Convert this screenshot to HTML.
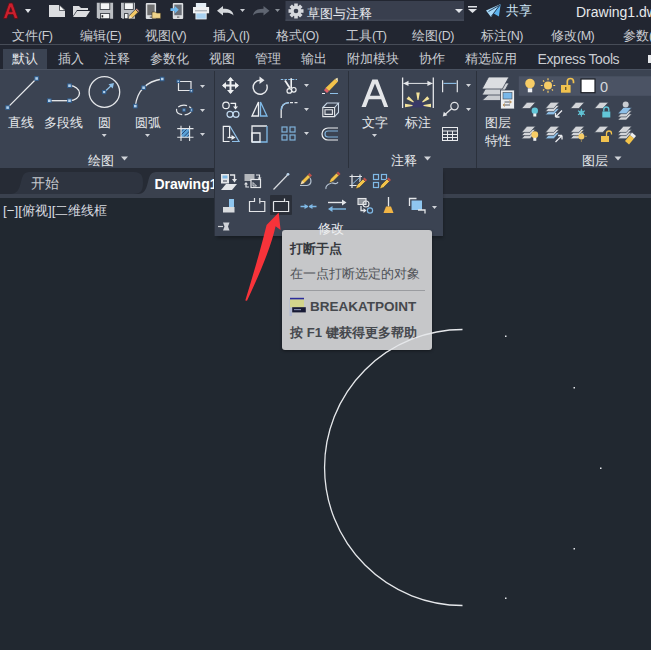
<!DOCTYPE html>
<html><head><meta charset="utf-8">
<style>
*{margin:0;padding:0;box-sizing:border-box}
html,body{width:651px;height:650px;overflow:hidden;background:#212830;font-family:"Liberation Sans",sans-serif}
.a{position:absolute}
.t{position:absolute;white-space:nowrap;line-height:1;color:#d9dce0;font-size:13px}
svg{position:absolute;overflow:visible}
</style></head><body>
<!-- title + menu + ribbon tabs background -->
<div class="a" style="left:0;top:0;width:651px;height:69px;background:#222631"></div>
<div class="a" style="left:0;top:44px;width:651px;height:1px;background:#474c57"></div>
<!-- ribbon panel -->
<div class="a" style="left:0;top:69px;width:651px;height:99px;background:#3b4352"></div>
<!-- file tab bar -->
<div class="a" style="left:0;top:168px;width:651px;height:26px;background:#262b35"></div>
<div class="a" style="left:0;top:194px;width:651px;height:4px;background:#3a414e"></div>
<!-- canvas -->
<div class="a" style="left:0;top:198px;width:651px;height:452px;background:#212830"></div>

<!-- ===== TITLE BAR ===== -->
<svg style="left:0;top:0" width="651" height="24">
 <!-- A logo -->
 <path d="M3.5 18.5 L9 3 L12.5 3 L18 18.5 L14.5 18.5 L13 14.5 L8.3 14.5 L6.8 18.5 Z M9.2 11.8 L12.2 11.8 L10.7 7.5 Z" fill="#cc1f2d" stroke="#5a1018" stroke-width="0.8"/>
 <path d="M25 9 L31 9 L28 13 Z" fill="#e0e3e8"/>
 <!-- new -->
 <path d="M49 5 L59 5 L65 10 L65 17 L49 17 Z" fill="#dcdde0"/>
 <path d="M59.5 5 L59.5 10.5 L65 10.5 Z" fill="#fafafa" stroke="#2a2e36" stroke-width="0.7"/>
 <!-- open -->
 <path d="M73 6 L79 6 L81 8 L88 8 L88 10 L77 10 L73 16 Z" fill="#dcdde0"/>
 <path d="M77 11 L90 11 L86 17 L73 17 Z" fill="#dcdde0"/>
 <!-- save -->
 <path d="M96.8 2.8 L113.1 2.8 L113.1 18.7 L98.3 18.7 L96.8 17.2 Z" fill="#bcbfc4"/>
 <rect x="100.2" y="2.8" width="9.6" height="6.6" fill="#f4f5f6" stroke="#2a2e36" stroke-width="0.8"/>
 <rect x="100.4" y="13.6" width="9.3" height="5.1" fill="#f4f5f6" stroke="#2a2e36" stroke-width="0.8"/>
 <rect x="101.6" y="15.2" width="1.6" height="2.2" fill="#222"/>
 <!-- save as -->
 <path d="M121 2.8 L135 2.8 L135 18.7 L122.5 18.7 L121 17.2 Z" fill="#bcbfc4"/>
 <rect x="124.3" y="2.8" width="9" height="6.6" fill="#f4f5f6" stroke="#2a2e36" stroke-width="0.8"/>
 <rect x="124.5" y="13.6" width="3.5" height="5.1" fill="#f4f5f6" stroke="#2a2e36" stroke-width="0.8"/>
 <path d="M128.8 18.8 L129.6 15.2 L135.4 9.4 L138.2 12.2 L132.4 18 Z" fill="#f3c865" stroke="#2a2e36" stroke-width="0.7"/>
 <path d="M135.4 9.4 L136.6 8.2 L139.4 11 L138.2 12.2 Z" fill="#d99a8a" stroke="#2a2e36" stroke-width="0.6"/>
 <path d="M128.8 18.8 L129.6 15.2 L132.4 18 Z" fill="#f5e2c0"/>
 <!-- phone folder -->
 <rect x="145.8" y="3" width="10.3" height="16" rx="1" fill="#dcdee1"/>
 <rect x="147.3" y="4.6" width="7.3" height="10.6" fill="#6f6f70"/>
 <rect x="149.8" y="16.6" width="2.4" height="1" fill="#555"/>
 <path d="M152 12 L155.5 12 L156.5 13 L160.7 13 L160.7 18.4 L152 18.4 Z" fill="#f0d48a" stroke="#3a3020" stroke-width="0.6"/>
 <!-- phone arrow -->
 <rect x="172.8" y="3" width="10.4" height="16" rx="1" fill="#dcdee1"/>
 <rect x="174.3" y="4.6" width="7.4" height="10.6" fill="#6a6f78"/>
 <rect x="177" y="16.6" width="2.4" height="1" fill="#555"/>
 <path d="M170.5 8.3 L174.8 8.3 L174.8 6 L178.8 9.7 L174.8 13.4 L174.8 11.1 L170.5 11.1 Z" fill="#6cb8ef"/>
 <!-- print -->
 <rect x="195.9" y="3" width="10.3" height="4" fill="#e4eef6"/>
 <rect x="193" y="7" width="16.1" height="6.3" fill="#eef0f2"/>
 <rect x="195.9" y="13" width="10.3" height="6" fill="#a9d2f2" stroke="#eef0f2" stroke-width="0.8"/>
 <rect x="195" y="10.3" width="12" height="1" fill="#9aa0a8"/>
 <!-- undo -->
 <path d="M217 10.8 L223 6 L223 8.8 C229 8.8 233 10.5 233.5 15.5 C231 12.8 228 12.8 223 12.8 L223 15.6 Z" fill="#d5d8dc"/>
 <path d="M240 9 L245 9 L242.5 12 Z" fill="#c9ccd2"/>
 <path d="M269.5 10.8 L263.5 6 L263.5 8.8 C257.5 8.8 253.5 10.5 253 15.5 C255.5 12.8 258.5 12.8 263.5 12.8 L263.5 15.6 Z" fill="#5f6571"/>
 <path d="M275 9 L280 9 L277.5 12 Z" fill="#8a9099"/>
 <!-- workspace combo -->
 <rect x="285.5" y="1" width="178.5" height="20" fill="#393f4e"/><rect x="285.5" y="19.5" width="178.5" height="1.2" fill="#474d5b"/>
 <g transform="translate(296,11)" fill="#d5d8dd">
  <circle r="5.2"/>
  <rect x="-1.8" y="-7.5" width="3.6" height="15"/>
  <rect x="-1.8" y="-7.5" width="3.6" height="15" transform="rotate(45)"/>
  <rect x="-1.8" y="-7.5" width="3.6" height="15" transform="rotate(90)"/>
  <rect x="-1.8" y="-7.5" width="3.6" height="15" transform="rotate(135)"/>
  <circle r="2.3" fill="#393f4e"/>
 </g>
 <path d="M455 9 L463 9 L459 13 Z" fill="#e0e3e8"/>
 <rect x="468" y="6" width="9" height="1.5" fill="#e0e3e8"/>
 <path d="M468 9 L477 9 L472.5 13 Z" fill="#e0e3e8"/>
 <!-- share -->
 <path d="M486 10.6 L500.7 4.1 L491 17 Z" fill="#a6d8f7"/>
 <path d="M500.7 4.1 L498.9 16.6 L493.8 13.6 Z" fill="#5bb3ee"/>
 <path d="M491.5 16 L500.3 4.6 M488.5 11.5 L499 5.5" stroke="#1f3a58" stroke-width="0.9"/>
</svg>
<div class="t" style="left:307px;top:6.5px;font-size:13.4px;color:#e8eaee">草图与注释</div>
<div class="t" style="left:506px;top:4px;font-size:13px;color:#cfe6f8">共享</div>
<div class="t" style="left:576px;top:5px;font-size:14px;color:#e6e8eb">Drawing1.dwg</div>
<!-- ===== MENU BAR ===== -->
<div class="t" style="left:12px;top:29px;color:#c9ccd1">文件<span style="font-size:12.5px;letter-spacing:-0.5px">(F)</span></div>
<div class="t" style="left:80px;top:29px;color:#c9ccd1">编辑<span style="font-size:12.5px;letter-spacing:-0.5px">(E)</span></div>
<div class="t" style="left:145px;top:29px;color:#c9ccd1">视图<span style="font-size:12.5px;letter-spacing:-0.5px">(V)</span></div>
<div class="t" style="left:213px;top:29px;color:#c9ccd1">插入<span style="font-size:12.5px;letter-spacing:-0.5px">(I)</span></div>
<div class="t" style="left:276px;top:29px;color:#c9ccd1">格式<span style="font-size:12.5px;letter-spacing:-0.5px">(O)</span></div>
<div class="t" style="left:346px;top:29px;color:#c9ccd1">工具<span style="font-size:12.5px;letter-spacing:-0.5px">(T)</span></div>
<div class="t" style="left:412px;top:29px;color:#c9ccd1">绘图<span style="font-size:12.5px;letter-spacing:-0.5px">(D)</span></div>
<div class="t" style="left:481px;top:29px;color:#c9ccd1">标注<span style="font-size:12.5px;letter-spacing:-0.5px">(N)</span></div>
<div class="t" style="left:551px;top:29px;color:#c9ccd1">修改<span style="font-size:12.5px;letter-spacing:-0.5px">(M)</span></div>
<div class="t" style="left:623px;top:29px;color:#c9ccd1">参数<span style="font-size:12.5px;letter-spacing:-0.5px">(P)</span></div>
<!-- ===== RIBBON TABS ===== -->
<div class="a" style="left:3px;top:49px;width:44px;height:20px;background:#3b4352"></div>
<div class="t" style="left:12px;top:52px;color:#e6e8eb">默认</div>
<div class="t" style="left:58px;top:52px;color:#c9ccd1">插入</div>
<div class="t" style="left:104px;top:52px;color:#c9ccd1">注释</div>
<div class="t" style="left:150px;top:52px;color:#c9ccd1">参数化</div>
<div class="t" style="left:209px;top:52px;color:#c9ccd1">视图</div>
<div class="t" style="left:255px;top:52px;color:#c9ccd1">管理</div>
<div class="t" style="left:301px;top:52px;color:#c9ccd1">输出</div>
<div class="t" style="left:347px;top:52px;color:#c9ccd1">附加模块</div>
<div class="t" style="left:419px;top:52px;color:#c9ccd1">协作</div>
<div class="t" style="left:465px;top:52px;color:#c9ccd1">精选应用</div>
<div class="t" style="left:537.5px;top:52px;color:#c9ccd1;font-size:14px;letter-spacing:-0.4px">Express Tools</div>
<div class="a" style="left:648px;top:55px;width:3px;height:8px;background:#e6e8eb"></div>

<!-- ===== RIBBON PANELS ===== -->
<div class="a" style="left:0;top:69px;width:651px;height:1px;background:#4a5261"></div>
<div class="a" style="left:214px;top:71px;width:1px;height:97px;background:#2b313c"></div>
<div class="a" style="left:348px;top:71px;width:1px;height:97px;background:#2b313c"></div>
<div class="a" style="left:476px;top:71px;width:1px;height:97px;background:#2b313c"></div>
<svg style="left:0;top:0" width="651" height="170">
 <!-- line -->
 <line x1="7.6" y1="107.6" x2="36.6" y2="78.5" stroke="#eceef0" stroke-width="1.2"/>
 <rect x="5.80" y="105.80" width="3.6" height="3.6" fill="#b3d0ea" stroke="#2d5b8c" stroke-width="1"/> <rect x="34.80" y="76.70" width="3.6" height="3.6" fill="#b3d0ea" stroke="#2d5b8c" stroke-width="1"/>
 <!-- polyline -->
 <line x1="49.3" y1="100.7" x2="69.5" y2="100.7" stroke="#eceef0" stroke-width="1.3"/>
 <path d="M69.5 85.7 A10 7.5 0 0 1 69.5 100.7" fill="none" stroke="#eceef0" stroke-width="1.3"/>
 <rect x="47.50" y="98.90" width="3.6" height="3.6" fill="#b3d0ea" stroke="#2d5b8c" stroke-width="1"/> <rect x="67.70" y="98.90" width="3.6" height="3.6" fill="#b3d0ea" stroke="#2d5b8c" stroke-width="1"/> <rect x="67.70" y="83.90" width="3.6" height="3.6" fill="#b3d0ea" stroke="#2d5b8c" stroke-width="1"/>
 <!-- circle -->
 <circle cx="104.4" cy="92" r="15.3" fill="none" stroke="#e4e6e9" stroke-width="1.3"/>
 <line x1="104.4" y1="92" x2="112.5" y2="84.5" stroke="#8fc0e8" stroke-width="1.3"/>
 <path d="M114 83 L108.5 84.3 L112.7 88.5 Z" fill="#8fc0e8"/>
 <rect x="102.60" y="90.50" width="3.2" height="3.2" fill="#b3d0ea" stroke="#2d5b8c" stroke-width="1"/>
 <!-- arc -->
 <path d="M135.3 106.1 C136.5 97 139 92 143.6 87.7 C148 83 155 80 162.2 79" fill="none" stroke="#e4e6e9" stroke-width="1.3"/>
 <rect x="133.50" y="104.30" width="3.6" height="3.6" fill="#b3d0ea" stroke="#2d5b8c" stroke-width="1"/> <rect x="141.80" y="85.90" width="3.6" height="3.6" fill="#b3d0ea" stroke="#2d5b8c" stroke-width="1"/> <rect x="160.40" y="77.20" width="3.6" height="3.6" fill="#b3d0ea" stroke="#2d5b8c" stroke-width="1"/>
 <!-- small draw icons -->
 <path d="M178.5 81.5 L191 81.5 L191 90.5 L178.5 90.5 Z" fill="none" stroke="#e4e6e9" stroke-width="1.2"/>
 <rect x="177.00" y="80.00" width="2.6" height="2.6" fill="#b3d0ea" stroke="#2d5b8c" stroke-width="1"/> <rect x="190.10" y="89.50" width="2.6" height="2.6" fill="#b3d0ea" stroke="#2d5b8c" stroke-width="1"/>
 <ellipse cx="184" cy="110" rx="7.5" ry="4.8" fill="none" stroke="#e4e6e9" stroke-width="1.2" stroke-dasharray="9 2.5"/>
 <rect x="182.80" y="108.80" width="2.4" height="2.4" fill="#b3d0ea" stroke="#2d5b8c" stroke-width="1"/> <rect x="190.30" y="108.80" width="2.4" height="2.4" fill="#b3d0ea" stroke="#2d5b8c" stroke-width="1"/>
 <rect x="181" y="128.6" width="8.6" height="8.6" fill="#5aa0d6"/>
 <path d="M181 135 L187.4 128.6 M181 131.5 L184 128.6 M183.5 137.2 L189.6 131 M187 137.2 L189.6 134.5" stroke="#23406a" stroke-width="0.9"/>
 <path d="M177.2 128.6 L193.5 128.6 M177.2 137.2 L193.5 137.2 M181 125.7 L181 141 M189.6 125.7 L189.6 141" stroke="#e4e6e9" stroke-width="1.1"/>
 <path d="M200 85 L205 85 L202.5 88 Z" fill="#d0d3d8"/>
 <path d="M200 109 L205 109 L202.5 112 Z" fill="#d0d3d8"/>
 <path d="M200 133 L205 133 L202.5 136 Z" fill="#d0d3d8"/>
 <path d="M101.7 134 L106.7 134 L104.2 137 Z" fill="#d0d3d8"/>
 <path d="M145 134 L150 134 L147.5 137 Z" fill="#d0d3d8"/>
 <path d="M121 156.5 L128 156.5 L124.5 160.5 Z" fill="#d0d3d8"/>

 <!-- modify panel -->
 <g stroke="#eef0f2" fill="#eef0f2">
  <path d="M230.5 78 L230.5 93 M223 85.5 L238 85.5" stroke-width="2" fill="none"/>
  <path d="M230.5 77 L227 81 L234 81 Z M230.5 94 L227 90 L234 90 Z M222 85.5 L226 82 L226 89 Z M239 85.5 L235 82 L235 89 Z" stroke="none"/>
 </g>
 <path d="M266.6 84.5 A7 7 0 1 1 260 80.3" fill="none" stroke="#e8eaed" stroke-width="1.4"/>
 <path d="M259.5 76.5 L264.5 80.3 L259.5 84 Z" fill="#e8eaed"/>
 <!-- trim -->
 <path d="M280.8 79.5 L297 79.5" stroke="#8fc0e8" stroke-width="1.1" stroke-dasharray="2.5 1.2"/>
 <path d="M285 80.5 L290 88.3" stroke="#eef0f2" stroke-width="1.8"/>
 <path d="M291.2 78.3 L291.2 88" stroke="#eef0f2" stroke-width="1.6"/>
 <circle cx="289.3" cy="90.9" r="2.3" fill="none" stroke="#eef0f2" stroke-width="1.2"/>
 <circle cx="293.8" cy="89.8" r="2.3" fill="none" stroke="#eef0f2" stroke-width="1.2"/>
 <path d="M304 84 L309 84 L306.5 87 Z M304 108 L309 108 L306.5 111 Z M304 132 L309 132 L306.5 135 Z" fill="#d0d3d8"/>
 <!-- erase -->
 <path d="M322 93.5 L325 93.5" stroke="#eef0f2" stroke-width="1"/><path d="M330 93.5 L338 93.5" stroke="#8fc0e8" stroke-width="1"/>
 <path d="M325.5 88 L335 79 L338 81.5 L329 91 Z" fill="#f3c34a"/>
 <path d="M335 79 L337.6 77.8 L338 81.5 Z" fill="#f7e7b8"/>
 <path d="M325.5 88 L329 91 L327 93 L324 90.3 Z" fill="#e0606a"/>
 <!-- copy -->
 <circle cx="226" cy="105.4" r="3.2" fill="none" stroke="#eef0f2" stroke-width="1.2"/>
 <path d="M230.5 103.3 L235.5 103.3 L235.5 107" fill="none" stroke="#eef0f2" stroke-width="1.3"/>
 <path d="M233 106.5 L238 106.5 L235.5 109.5 Z" fill="#eef0f2"/>
 <circle cx="230" cy="114.3" r="3" fill="none" stroke="#c0d8ee" stroke-width="1.2"/>
 <circle cx="236" cy="114.3" r="3" fill="none" stroke="#c0d8ee" stroke-width="1.2"/>
 <!-- mirror -->
 <path d="M258.5 102 L252 116 L258.5 116 Z" fill="none" stroke="#eef0f2" stroke-width="1.3"/>
 <path d="M260.5 102 L267 116 L260.5 116 Z" fill="none" stroke="#7fb9e6" stroke-width="1.3"/>
 <!-- fillet -->
 <path d="M281.2 118 L281.2 110.5 Q281.5 103 289 102.6" fill="none" stroke="#e4e6e9" stroke-width="1.3"/>
 <path d="M281.2 110 Q281.5 103 289 102.6" fill="none" stroke="#8fc0e8" stroke-width="1.3"/>
 <path d="M290 102.6 L297.5 102.6" stroke="#e4e6e9" stroke-width="1.2" stroke-dasharray="3 1.5"/>
 <!-- 3d box -->
 <path d="M322.8 107.5 L334.6 107.5 L334.6 116.6 L322.8 116.6 Z M325 109.7 L332.4 109.7 L332.4 114.4 L325 114.4 Z" fill="none" stroke="#e4e6e9" stroke-width="1.1"/>
 <path d="M322.8 107.5 L327 103 L338.5 103 L334.6 107.5 M338.5 103 L338.5 112.5 L334.6 116.6" fill="none" stroke="#c7d6e6" stroke-width="1.1"/>
 <!-- stretch -->
 <path d="M229.6 137 L229.6 126.3 L223.3 126.3 L223.3 141.5 L229.6 141.5" fill="none" stroke="#eef0f2" stroke-width="1.2"/>
 <path d="M230 126.3 L239 141.5 L232 141.5" fill="none" stroke="#8fc0e8" stroke-width="1.2"/>
 <path d="M227.5 137.5 L232.5 137.5" stroke="#eef0f2" stroke-width="1.3"/>
 <path d="M235.5 137.5 L231.5 135 L231.5 140 Z" fill="#eef0f2"/>
 <!-- scale -->
 <path d="M252 142 L252 126 L267 126" fill="none" stroke="#e8eaed" stroke-width="1.3"/><path d="M267 126 L267 142 L252 142" fill="none" stroke="#7fb9e6" stroke-width="1.3"/>
 <path d="M252 133 L260 133 L260 142 L252 142 Z" fill="none" stroke="#eef0f2" stroke-width="1.3"/>
 <!-- array -->
 <g fill="none" stroke="#7fb2db" stroke-width="1.2">
  <rect x="282" y="127" width="5" height="5"/><rect x="290" y="127" width="5" height="5"/>
  <rect x="282" y="135" width="5" height="5"/><rect x="290" y="135" width="5" height="5"/>
 </g>
 <!-- offset -->
 <path d="M338 128 L328 128 A6 6 0 0 0 328 140 L338 140" fill="none" stroke="#eef0f2" stroke-width="1.2"/>
 <path d="M338 131 L328 131 A3 3 0 0 0 328 137 L338 137" fill="none" stroke="#7fb2db" stroke-width="1.2"/>

 <!-- annotation panel -->
 <path d="M361.5 107 L372.3 79.4 L377.7 79.4 L388.2 107 L384.1 107 L381.2 99.2 L368.8 99.2 L365.9 107 Z M370 95.8 L380 95.8 L375 83.5 Z" fill="#e4e6e9"/>
 <path d="M402.6 77.5 L402.6 108 M433.3 77.5 L433.3 108" stroke="#e4e6e9" stroke-width="1.3"/>
 <path d="M403.5 83.4 L432.5 83.4" stroke="#e4e6e9" stroke-width="1"/>
 <path d="M403.3 83.4 L408.5 80.8 L408.5 86 Z M432.6 83.4 L427.4 80.8 L427.4 86 Z" fill="#e4e6e9"/>
 <path d="M410 107.5 A8 7 0 0 1 426 107.5 Z" fill="#383470" opacity="0.7"/>
 <path d="M412.5 105.0 L405.0 103.7 L405.0 107.3 L412.5 106.0 Z M413.9 101.8 L408.7 96.2 L406.5 99.1 L413.3 102.6 Z M418.5 100.0 L419.8 92.5 L416.2 92.5 L417.5 100.0 Z M422.7 102.6 L429.5 99.1 L427.3 96.2 L422.1 101.8 Z M423.5 106.0 L431.0 107.3 L431.0 103.7 L423.5 105.0 Z " fill="#f3e29a"/>
 <path d="M442.6 80.3 L442.6 92.3 M457.3 80.3 L457.3 92.3" stroke="#e4e6e9" stroke-width="1.2"/>
 <path d="M443.5 83.4 L456.5 83.4" stroke="#8fc0e8" stroke-width="1.1"/>
 <circle cx="454.5" cy="106.1" r="3.7" fill="none" stroke="#e4e6e9" stroke-width="1.2"/>
 <path d="M451.8 108.5 L444.5 115" stroke="#e4e6e9" stroke-width="1.2"/>
 <path d="M442.8 116.6 L443.8 111.8 L447.4 115.3 Z" fill="#e4e6e9"/>
 <g fill="none" stroke="#e8eaed" stroke-width="1">
  <rect x="442.5" y="127.5" width="15" height="13"/>
  <path d="M442.5 131 L457.5 131 M442.5 134.5 L457.5 134.5 M442.5 137.5 L457.5 137.5 M447.5 131 L447.5 140.5 M452.5 131 L452.5 140.5"/>
 </g>
 <path d="M466 84 L471 84 L468.5 87 Z M466 108 L471 108 L468.5 111 Z" fill="#d0d3d8"/>
 <path d="M372 134 L377 134 L374.5 137 Z" fill="#d0d3d8"/>
 <path d="M424 156.5 L431 156.5 L427.5 160.5 Z" fill="#d0d3d8"/>

 <!-- layers panel -->
 <g>
 <path d="M482 100.5 L488.5 94.5 L509 94.5 L502.5 100.5 Z" fill="#c9ccd0" stroke="#3b4352" stroke-width="0.8"/>
 <path d="M482 95 L488.5 83 L509 83 L502.5 95 Z" fill="#cfd2d6" stroke="#3b4352" stroke-width="0.8"/>
 <path d="M482 89 L488.6 77 L509 77 L502.4 89 Z" fill="#dcdee1" stroke="#3b4352" stroke-width="0.8"/>
 <rect x="500.5" y="90" width="14" height="19" fill="#eceef0" stroke="#3b4352" stroke-width="0.8"/>
 <rect x="503" y="92.5" width="9" height="6.5" fill="#79b8ea" stroke="#444a55" stroke-width="0.6"/>
 <path d="M504.5 102 L511 102 M503.5 105 L510 105" stroke="#5a5f66" stroke-width="1"/>
 <path d="M509.5 100.5 L511.5 102 L509.5 103.5 M505 103.5 L503 105 L505 106.5" fill="none" stroke="#c58a3a" stroke-width="0.8"/>
 </g>
 <rect x="518.8" y="76.3" width="132.2" height="19.5" fill="#4b5364"/>
 <circle cx="530" cy="83.5" r="4.8" fill="#f6cc66"/>
 <rect x="527.8" y="88.3" width="4.4" height="4" fill="#eef0f2"/>
 <circle cx="548" cy="85.5" r="4" fill="#f6cc66"/>
 <g stroke="#f6cc66" stroke-width="1.2"><path d="M548 78.3 L548 80.2 M548 90.8 L548 92.7 M540.8 85.5 L542.7 85.5 M553.3 85.5 L555.2 85.5 M543 80.5 L544.2 81.7 M551.8 89.3 L553 90.5 M553 80.5 L551.8 81.7 M543 90.5 L544.2 89.3"/></g>
 <rect x="561" y="85" width="9.6" height="7.7" fill="#f1c24e"/>
 <rect x="565" y="87" width="1.4" height="3" fill="#6a5a2a"/>
 <path d="M567.3 85 L567.3 81.6 A3.1 3.1 0 0 1 573.5 81.6 L573.5 83.2" fill="none" stroke="#f1c24e" stroke-width="1.7"/>
 <rect x="581" y="79" width="14" height="13.7" fill="#ffffff" stroke="#1c1f25" stroke-width="1.2"/>
 <path d="M521.5 108.5 L527.0 102.3 L535.5 102.3 L530.0 108.5 Z" fill="#d3d5d9" stroke="#3b4352" stroke-width="0.7"/>
 <circle cx="534.8" cy="110.7" r="3.2" fill="#62c6d8"/><rect x="533.3" y="113.5" width="3" height="3" fill="#eef0f2"/>
 <path d="M545.3 114.8 L550.8 108.6 L559.3 108.6 L553.8 114.8 Z" fill="#8fc0e8" stroke="#3b4352" stroke-width="0.7"/><path d="M545.3 111.6 L550.8 105.4 L559.3 105.4 L553.8 111.6 Z" fill="#d3d5d9" stroke="#3b4352" stroke-width="0.7"/><path d="M545.3 108.4 L550.8 102.2 L559.3 102.2 L553.8 108.4 Z" fill="#d3d5d9" stroke="#3b4352" stroke-width="0.7"/>
 <path d="M562 110.5 L555.5 117 M555.5 117 L559.5 117 M555.5 117 L555.5 113" stroke="#e8eaed" stroke-width="1.3" fill="none"/>
 <path d="M570.4 108.5 L575.9 102.3 L584.4 102.3 L578.9 108.5 Z" fill="#d3d5d9" stroke="#3b4352" stroke-width="0.7"/>
 <g stroke="#62c6d8" stroke-width="1.1"><path d="M581.4 108.8 L581.4 116.8 M578 110.8 L584.8 114.8 M578 114.8 L584.8 110.8"/></g><circle cx="581.4" cy="112.8" r="2" fill="none" stroke="#62c6d8" stroke-width="1"/>
 <path d="M594.4 108.5 L599.9 102.3 L608.4 102.3 L602.9 108.5 Z" fill="#d3d5d9" stroke="#3b4352" stroke-width="0.7"/>
 <rect x="602.3" y="111.5" width="8" height="6" fill="#62c6d8"/><path d="M603.8 111.5 L603.8 109.5 A2.5 2.5 0 0 1 608.8 109.5 L608.8 111.5" fill="none" stroke="#62c6d8" stroke-width="1.3"/>
 <path d="M617.8 120.1 L623.3 113.9 L631.8 113.9 L626.3 120.1 Z" fill="#d3d5d9" stroke="#3b4352" stroke-width="0.7"/><path d="M617.8 116.9 L623.3 110.7 L631.8 110.7 L626.3 116.9 Z" fill="#d3d5d9" stroke="#3b4352" stroke-width="0.7"/><path d="M617.8 113.7 L623.3 107.5 L631.8 107.5 L626.3 113.7 Z" fill="#8fc0e8" stroke="#3b4352" stroke-width="0.7"/>
 <circle cx="625.7" cy="104.5" r="3" fill="#c9ccd1"/>
 <path d="M521.5 138.8 L527.0 132.6 L535.5 132.6 L530.0 138.8 Z" fill="#d3d5d9" stroke="#3b4352" stroke-width="0.7"/><path d="M521.5 135.6 L527.0 129.4 L535.5 129.4 L530.0 135.6 Z" fill="#d3d5d9" stroke="#3b4352" stroke-width="0.7"/><path d="M521.5 132.4 L527.0 126.2 L535.5 126.2 L530.0 132.4 Z" fill="#d3d5d9" stroke="#3b4352" stroke-width="0.7"/>
 <circle cx="534.8" cy="134.7" r="3.4" fill="#f6cc66"/><rect x="533.3" y="137.8" width="3" height="3" fill="#eef0f2"/>
 <path d="M545.3 138.8 L550.8 132.6 L559.3 132.6 L553.8 138.8 Z" fill="#8fc0e8" stroke="#3b4352" stroke-width="0.7"/><path d="M545.3 135.6 L550.8 129.4 L559.3 129.4 L553.8 135.6 Z" fill="#d3d5d9" stroke="#3b4352" stroke-width="0.7"/><path d="M545.3 132.4 L550.8 126.2 L559.3 126.2 L553.8 132.4 Z" fill="#d3d5d9" stroke="#3b4352" stroke-width="0.7"/>
 <path d="M555.5 142 L562 135.5 M562 135.5 L558 135.5 M562 135.5 L562 139.5" stroke="#e8eaed" stroke-width="1.3" fill="none"/>
 <path d="M570.4 138.8 L575.9 132.6 L584.4 132.6 L578.9 138.8 Z" fill="#d3d5d9" stroke="#3b4352" stroke-width="0.7"/><path d="M570.4 135.6 L575.9 129.4 L584.4 129.4 L578.9 135.6 Z" fill="#d3d5d9" stroke="#3b4352" stroke-width="0.7"/><path d="M570.4 132.4 L575.9 126.2 L584.4 126.2 L578.9 132.4 Z" fill="#d3d5d9" stroke="#3b4352" stroke-width="0.7"/>
 <circle cx="581.4" cy="136.4" r="3" fill="#f6cc66"/><g stroke="#f6cc66" stroke-width="0.9"><path d="M581.4 131.3 L581.4 132.3 M581.4 140.5 L581.4 141.5 M576.3 136.4 L577.3 136.4 M585.5 136.4 L586.5 136.4"/></g>
 <path d="M594.4 132.4 L599.9 126.2 L608.4 126.2 L602.9 132.4 Z" fill="#d3d5d9" stroke="#3b4352" stroke-width="0.7"/>
 <rect x="601" y="136" width="8" height="6" fill="#f1c24e"/><path d="M606.5 136 L606.5 133.5 A2.5 2.5 0 0 1 611.5 133.5 L611.5 134.5" fill="none" stroke="#f1c24e" stroke-width="1.3"/>
 <path d="M617.8 138.8 L623.3 132.6 L631.8 132.6 L626.3 138.8 Z" fill="#d3d5d9" stroke="#3b4352" stroke-width="0.7"/><path d="M617.8 135.6 L623.3 129.4 L631.8 129.4 L626.3 135.6 Z" fill="#d3d5d9" stroke="#3b4352" stroke-width="0.7"/><path d="M617.8 132.4 L623.3 126.2 L631.8 126.2 L626.3 132.4 Z" fill="#d3d5d9" stroke="#3b4352" stroke-width="0.7"/>
 <path d="M625 141 L630 135 L634 138.5 L629 144.5 Z" fill="#f3c34a"/><path d="M630 135 L632 132.5 L636 136 L634 138.5 Z" fill="#eef0f2"/>
 <path d="M614.5 156.5 L621.5 156.5 L618 160.5 Z" fill="#d0d3d8"/>
</svg>
<div class="t" style="left:8px;top:116px;color:#e6e8eb">直线</div>
<div class="t" style="left:44px;top:116px;color:#e6e8eb">多段线</div>
<div class="t" style="left:98px;top:116px;color:#e6e8eb">圆</div>
<div class="t" style="left:135px;top:116px;color:#e6e8eb">圆弧</div>
<div class="t" style="left:88px;top:154px;color:#e6e8eb">绘图</div>
<div class="t" style="left:362px;top:116px;color:#e6e8eb">文字</div>
<div class="t" style="left:405px;top:116px;color:#e6e8eb">标注</div>
<div class="t" style="left:391px;top:154px;color:#e6e8eb">注释</div>
<div class="t" style="left:485px;top:116px;color:#e6e8eb">图层</div>
<div class="t" style="left:485px;top:134px;color:#e6e8eb">特性</div>
<div class="t" style="left:582px;top:154px;color:#e6e8eb">图层</div>
<div class="t" style="left:600px;top:80px;color:#d5d8dc;font-size:14.5px">0</div>

<!-- ===== FILE TABS ===== -->
<svg style="left:0;top:168px" width="651" height="30">
 <path d="M10 26 C17 26 19 22 21 14 C23 6 24 4 31 4 L134 4 C142 4 143 9 143 15 C143 22 141 26 134 26 Z" fill="#2e3440"/>
 <path d="M138 26 C144 26 146 22 148 14 C150 6 151 4 158 4 L230 4 L230 26 Z" fill="#3a414e"/>
</svg>
<div class="t" style="left:30.5px;top:177px;color:#c4c7cc;font-size:13.5px">开始</div>
<div class="t" style="left:154.5px;top:177px;color:#ffffff;font-weight:bold;font-size:14px">Drawing1</div>
<div class="t" style="left:3px;top:204px;color:#d9dce0;font-size:13.4px">[−][俯视][二维线框</div>

<!-- ===== DROPDOWN MODIFY PANEL ===== -->
<div class="a" style="left:215px;top:168px;width:228px;height:68px;background:#3b4352;box-shadow:1px 3px 3px -1px rgba(0,0,0,0.3)"></div>
<div class="a" style="left:214px;top:168px;width:1px;height:68px;background:#2b313c"></div>
<div class="a" style="left:270px;top:195px;width:22px;height:19.5px;background:#2a2f39;border-radius:1px"></div>
<svg style="left:0;top:0" width="651" height="260">
 <!-- row1: icon1 -->
 <rect x="221" y="174" width="8" height="9.5" fill="#e4e6e9"/>
 <rect x="222.5" y="175.5" width="5" height="3" fill="#7fb9e6"/>
 <path d="M223 181 L227 181" stroke="#3b4352" stroke-width="1"/>
 <path d="M221 190 L226 184 L237 184 L232 190 Z" fill="#e4e6e9"/>
 <path d="M230 175 L234.5 175 L234.5 180" fill="none" stroke="#e4e6e9" stroke-width="1.4"/>
 <path d="M232 179 L237 179 L234.5 182.5 Z" fill="#e4e6e9"/>
 <!-- icon2 -->
 <rect x="244.5" y="174" width="10" height="7" fill="#b3b6bb"/>
 <rect x="251" y="179.5" width="9.5" height="8" fill="#3b4352" stroke="#e4e6e9" stroke-width="1.2"/>
 <path d="M253 186 L253 182.5 L256.5 186 Z" fill="none" stroke="#e4e6e9" stroke-width="0.9"/>
 <path d="M256 175 L259.5 175 L259.5 178.5" fill="none" stroke="#e4e6e9" stroke-width="1.2"/>
 <path d="M257.5 177.5 L261.5 177.5 L259.5 180 Z" fill="#e4e6e9"/>
 <path d="M249 187 L246 187 L246 183.5" fill="none" stroke="#e4e6e9" stroke-width="1.2"/>
 <path d="M244 184.5 L248 184.5 L246 182 Z" fill="#e4e6e9"/>
 <!-- icon3 line -->
 <path d="M273.5 189.5 L287.5 175" stroke="#d9dce0" stroke-width="1.2"/>
 <circle cx="288" cy="174.3" r="1.4" fill="#b9d3ea"/>
 <!-- icon4 edit polyline -->
 <path d="M307 176.5 A5 4.6 0 0 1 307 185.5 L300 185.5" fill="none" stroke="#b6c3d1" stroke-width="1.2"/>
 <path d="M300.5 184.5 L302 180.5 L308 174.5 L310.5 177 L304.5 183 Z" fill="#f3c34a" stroke="#2a2f39" stroke-width="0.6"/>
 <path d="M308 174.5 L309.5 173 L312 175.5 L310.5 177 Z" fill="#c0504a"/>
 <path d="M300.5 184.5 L302 180.5 L304.5 183 Z" fill="#f2dcb0"/>
 <!-- icon5 edit spline -->
 <path d="M326 189 C325 185 329 184 331 183 C334 182 336 186 338 182" fill="none" stroke="#b6c3d1" stroke-width="1.1"/>
 <path d="M329 183 L330.5 179 L336.5 173 L339 175.5 L333 181.5 Z" fill="#f3c34a" stroke="#2a2f39" stroke-width="0.6"/>
 <path d="M336.5 173 L338 171.5 L340.5 174 L339 175.5 Z" fill="#c0504a"/>
 <!-- icon6 edit hatch -->
 <path d="M349.5 176.5 L362 176.5 M349.5 185.5 L358 185.5 M352 174.5 L352 188 M360 174.5 L360 182" stroke="#e4e6e9" stroke-width="1.2"/>
 <path d="M352.5 184 L360 177" stroke="#7fb2db" stroke-width="1"/>
 <path d="M355.5 189 L357 185 L363 179 L365.5 181.5 L359.5 187.5 Z" fill="#f3c34a" stroke="#2a2f39" stroke-width="0.6"/>
 <path d="M363 179 L364.5 177.5 L367 180 L365.5 181.5 Z" fill="#c0504a"/>
 <!-- icon7 edit array -->
 <g fill="none" stroke="#7fb9e6" stroke-width="1.2"><rect x="373.5" y="174.5" width="5" height="5"/><rect x="381.5" y="174.5" width="5" height="5"/><rect x="373.5" y="182.5" width="5" height="5"/></g>
 <path d="M379.5 189 L381 185 L387 179 L389.5 181.5 L383.5 187.5 Z" fill="#f3c34a" stroke="#2a2f39" stroke-width="0.6"/>
 <path d="M387 179 L388.5 177.5 L391 180 L389.5 181.5 Z" fill="#c0504a"/>
 <!-- row2 icon1 -->
 <rect x="229" y="199" width="5" height="8" fill="#8fc6ef"/>
 <rect x="223" y="207" width="11.5" height="5.5" fill="#d9dcdf"/>
 <!-- break -->
 <path d="M254.5 198 L254.5 201.5 L249.5 201.5 L249.5 211.5 L264.8 211.5 L264.8 201.5 L260.5 201.5 M259.8 198 L259.8 203.5" fill="none" stroke="#e4e6e9" stroke-width="1.2"/>
 <!-- break at point -->
 <path d="M273.5 201.5 L284.5 201.5 L284.5 198.5 M285.5 201.5 L288.6 201.5 L288.6 211.5 L273.5 211.5 L273.5 201.5" fill="none" stroke="#e4e6e9" stroke-width="1.2"/>
 <!-- join -->
 <path d="M300.5 206.5 L306 206.5 M311 206.5 L316.5 206.5" stroke="#7fb9e6" stroke-width="1.3"/>
 <path d="M309 206.5 L304.5 204 L304.5 209 Z M308 206.5 L312.5 204 L312.5 209 Z" fill="#7fb9e6"/>
 <path d="M308.5 203 L308.5 210" stroke="#3b4352" stroke-width="0.8"/>
 <!-- reverse -->
 <path d="M328 202.5 L344 202.5" stroke="#e4e6e9" stroke-width="1.4"/>
 <path d="M346.5 202.5 L342 199.5 L342 205.5 Z" fill="#e4e6e9"/>
 <path d="M331 209 L346 209" stroke="#7fb9e6" stroke-width="1.4"/>
 <path d="M328 209 L332.5 206 L332.5 212 Z" fill="#7fb9e6"/>
 <!-- copy props? -->
 <rect x="358" y="198.5" width="8" height="6" fill="#8d929a" stroke="#e4e6e9" stroke-width="1.1"/>
 <circle cx="366" cy="204" r="3" fill="none" stroke="#e4e6e9" stroke-width="1.1"/>
 <path d="M361 206 L361 210.5 L364.5 210.5" fill="none" stroke="#e4e6e9" stroke-width="1.3"/>
 <path d="M363.5 208 L366.5 210.5 L363.5 213 Z" fill="#e4e6e9"/>
 <circle cx="370" cy="210.5" r="2.6" fill="none" stroke="#7fb9e6" stroke-width="1.2"/>
 <!-- broom -->
 <path d="M388.5 197 L388.5 206.5" stroke="#e4e6e9" stroke-width="1.3"/>
 <path d="M383.5 213 L386 206.5 L391 206.5 L393.5 213 Z" fill="#f1b545"/>
 <!-- draw order -->
 <path d="M409.5 206 L409.5 198.5 L416.5 198.5" fill="none" stroke="#e4e6e9" stroke-width="1.3"/>
 <rect x="411.5" y="200.5" width="10.5" height="9.5" fill="#8fc6ef"/>
 <path d="M418 210 L425 210 L425 213.5" fill="none" stroke="#e4e6e9" stroke-width="1.3"/>
 <path d="M432 206 L437 206 L434.5 209 Z" fill="#d0d3d8"/>
 <!-- pin -->
 <path d="M218 226.5 L223 226.5" stroke="#d0d3d8" stroke-width="1.2"/>
 <path d="M223 222.5 L229.5 222.5 L228 226.5 L229.5 230.5 L223 230.5 L224.5 226.5 Z" fill="#d0d3d8"/>
</svg>

<!-- ===== TOOLTIP ===== -->
<div class="a" style="left:282px;top:230px;width:150px;height:120px;background:#c6c7c9;border-radius:3px;box-shadow:0 1px 3px rgba(0,0,0,0.4)"></div>
<div class="t" style="left:290px;top:242px;color:#35383d;font-weight:bold;font-size:13.3px">打断于点</div>
<div class="t" style="left:290px;top:267.5px;color:#505358;font-size:12.8px">在一点打断选定的对象</div>
<div class="a" style="left:290px;top:290px;width:135px;height:1px;background:#9a9ca0"></div>
<svg style="left:0;top:0" width="651" height="650">
 <rect x="289.5" y="299" width="2.5" height="17" fill="#aab4d8" opacity="0.7"/>
 <rect x="290" y="297.8" width="14" height="1.8" fill="#2c2c9c"/>
 <rect x="290" y="299.6" width="14" height="7.8" fill="#d2d48c"/>
 <rect x="292.2" y="307.2" width="13.6" height="5.2" fill="#171a35"/>
 <rect x="294" y="309" width="7" height="1.2" fill="#8088a8"/>
</svg>
<div class="t" style="left:310px;top:299.5px;color:#45484d;font-weight:bold;font-size:13.5px">BREAKATPOINT</div>
<div class="t" style="left:290px;top:326px;color:#45484d;font-weight:bold;font-size:13.1px">按 F1 键获得更多帮助</div>

<div class="t" style="left:317.5px;top:221.5px;color:#eef0f2">修改</div>
<!-- ===== CIRCLE ===== -->
<svg style="left:0;top:0" width="651" height="650">
 <path d="M462.5 329.5 A138 138 0 0 0 462.5 605.5" fill="none" stroke="#e6e8eb" stroke-width="1.3"/>
 <g fill="#e6e8eb">
  <rect x="505" y="335.5" width="1.5" height="1.5"/>
  <rect x="573.5" y="387" width="1.5" height="1.5"/>
  <rect x="600" y="467.5" width="1.5" height="1.5"/>
  <rect x="573.5" y="548" width="1.5" height="1.5"/>
  <rect x="505" y="597.5" width="1.5" height="1.5"/>
 </g>
</svg>

<!-- ===== RED ARROW ===== -->
<svg style="left:0;top:0" width="651" height="650">
 <path d="M278.7 212.5 L280.6 230 L275.6 226.3 Q270 252 247 300.8 L245.3 300.5 Q259 256 266.6 225 Z" fill="#f7333a"/>
</svg>
</body></html>
